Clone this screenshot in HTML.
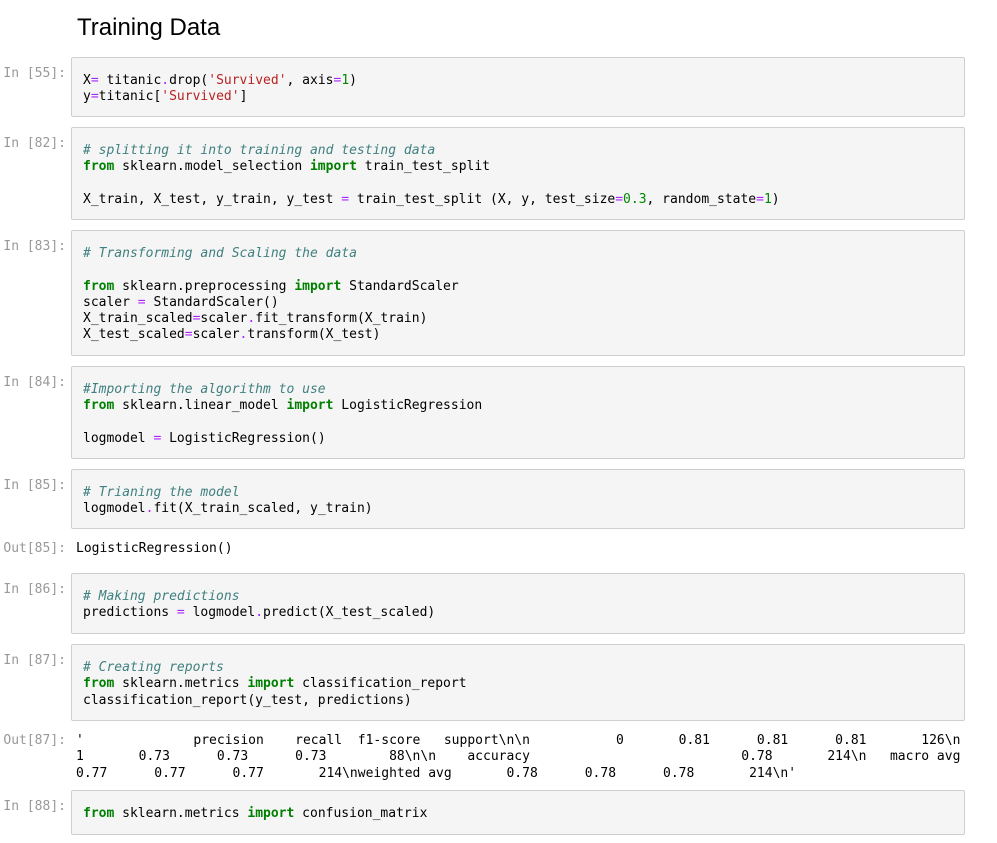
<!DOCTYPE html>
<html><head><style>
body{margin:0;background:#fff;width:997px;height:843px;overflow:hidden;position:relative;font-family:"DejaVu Sans Mono",monospace;font-size:13px;color:#000}
h1{position:absolute;left:77px;top:14px;margin:0;font:24px "Liberation Sans",sans-serif;color:#000}
.p{position:absolute;left:0;width:66px;text-align:right;color:#999;font-size:13px;line-height:16px;white-space:pre}
.o{color:#999}
.b{position:absolute;left:71px;width:894px;background:#f5f5f5;border:1px solid #cfcfcf;border-radius:2px;box-sizing:border-box;overflow:hidden}
pre{margin:0;padding:15px 11px 0;font:13px/16.25px "DejaVu Sans Mono",monospace;white-space:pre}
.k{color:#008000;font-weight:bold}.c{color:#408080;font-style:italic}.s{color:#BA2121}.n{color:#080}.op{color:#AA22FF}
.out{position:absolute;left:76px;font:13px/16.25px "DejaVu Sans Mono",monospace;white-space:pre}
.wrap{white-space:pre-wrap;word-break:break-all;width:888px}
</style></head><body>
<h1>Training Data</h1>

<div class="p" style="top:66px">In [55]:</div>
<div class="b" style="top:57px;height:60px"><pre>X<span class="op">=</span> titanic<span class="op">.</span>drop(<span class="s">'Survived'</span>, axis<span class="op">=</span><span class="n">1</span>)
y<span class="op">=</span>titanic[<span class="s">'Survived'</span>]</pre></div>

<div class="p" style="top:136px">In [82]:</div>
<div class="b" style="top:127px;height:93px"><pre><span class="c"># splitting it into training and testing data</span>
<span class="k">from</span> sklearn.model_selection <span class="k">import</span> train_test_split

X_train, X_test, y_train, y_test <span class="op">=</span> train_test_split (X, y, test_size<span class="op">=</span><span class="n">0.3</span>, random_state<span class="op">=</span><span class="n">1</span>)</pre></div>

<div class="p" style="top:239px">In [83]:</div>
<div class="b" style="top:230px;height:126px"><pre><span class="c"># Transforming and Scaling the data</span>

<span class="k">from</span> sklearn.preprocessing <span class="k">import</span> StandardScaler
scaler <span class="op">=</span> StandardScaler()
X_train_scaled<span class="op">=</span>scaler<span class="op">.</span>fit_transform(X_train)
X_test_scaled<span class="op">=</span>scaler<span class="op">.</span>transform(X_test)</pre></div>

<div class="p" style="top:375px">In [84]:</div>
<div class="b" style="top:366px;height:93px"><pre><span class="c">#Importing the algorithm to use</span>
<span class="k">from</span> sklearn.linear_model <span class="k">import</span> LogisticRegression

logmodel <span class="op">=</span> LogisticRegression()</pre></div>

<div class="p" style="top:478px">In [85]:</div>
<div class="b" style="top:469px;height:60px"><pre><span class="c"># Trianing the model</span>
logmodel<span class="op">.</span>fit(X_train_scaled, y_train)</pre></div>

<div class="p o" style="top:541px">Out[85]:</div>
<div class="out" style="top:541px">LogisticRegression()</div>

<div class="p" style="top:582px">In [86]:</div>
<div class="b" style="top:573px;height:61px"><pre><span class="c"># Making predictions</span>
predictions <span class="op">=</span> logmodel<span class="op">.</span>predict(X_test_scaled)</pre></div>

<div class="p" style="top:653px">In [87]:</div>
<div class="b" style="top:644px;height:77px"><pre><span class="c"># Creating reports</span>
<span class="k">from</span> sklearn.metrics <span class="k">import</span> classification_report
classification_report(y_test, predictions)</pre></div>

<div class="p o" style="top:733px">Out[87]:</div>
<div class="out wrap" style="top:733px">'              precision    recall  f1-score   support\n\n           0       0.81      0.81      0.81       126\n           1       0.73      0.73      0.73        88\n\n    accuracy                           0.78       214\n   macro avg       0.77      0.77      0.77       214\nweighted avg       0.78      0.78      0.78       214\n'</div>

<div class="p" style="top:799px">In [88]:</div>
<div class="b" style="top:790px;height:45px"><pre><span class="k">from</span> sklearn.metrics <span class="k">import</span> confusion_matrix</pre></div>
</body></html>
